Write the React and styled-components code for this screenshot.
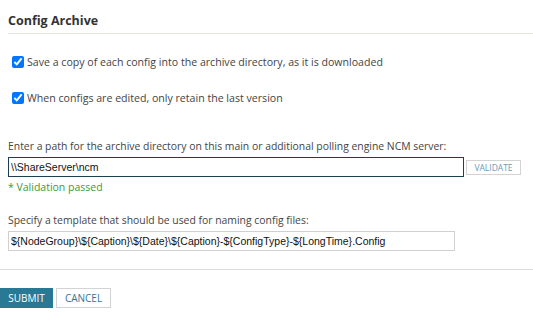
import React, { useState } from 'react';
import styled, { createGlobalStyle } from 'styled-components';

const GlobalStyle = createGlobalStyle`
  body {
    margin: 0;
    background: #ffffff;
    font-family: "Open Sans", "Liberation Sans", sans-serif;
    color: #444;
  }
`;

const Page = styled.div`
  width: 533px;
`;

const Header = styled.div`
  margin-left: 8px;
  padding: 13px 0 4px;
  border-bottom: 1px solid #e4e4dc;
`;

const Title = styled.h2`
  margin: 0;
  font-size: 12.5px;
  line-height: 16px;
  font-weight: 700;
  color: #333;
`;

const Body = styled.div`
  padding: 20px 8px 18px;
  display: flex;
  flex-direction: column;
`;

const CheckRow = styled.label`
  display: flex;
  align-items: center;
  gap: 3px;
  height: 16px;
  margin-bottom: ${(p) => p.$gap || 0}px;
  padding-left: 4px;
  font-size: 10.6px;
  line-height: 16px;
  color: #444;
`;

const Check = styled.input`
  width: 12px;
  height: 12px;
  margin: 0;
`;

const FieldLabel = styled.div`
  font-size: 10.4px;
  line-height: 16px;
  color: #444;
  margin-bottom: 4px;
`;

const InputRow = styled.div`
  display: flex;
  align-items: center;
  gap: 2px;
  margin-top: -1px;
`;

const TextInput = styled.input`
  box-sizing: border-box;
  width: ${(p) => p.$width}px;
  height: ${(p) => p.$height}px;
  padding: 0 2px;
  margin-top: ${(p) => p.$lift || 0}px;
  border: 1px solid ${(p) => (p.$dark ? '#1c3f52' : '#d0d0d0')};
  border-radius: 0;
  font-family: "Liberation Sans", Arial, sans-serif;
  font-size: 10.5px;
  color: #111;
  outline: none;
`;

const ValidateButton = styled.button`
  box-sizing: border-box;
  width: 55px;
  height: 15px;
  padding: 0;
  background: #fff;
  border: 1px solid #d3d3d3;
  font-family: "Open Sans", sans-serif;
  font-size: 8.5px;
  color: #6a9bb2;
  text-transform: uppercase;
`;

const Passed = styled.div`
  font-size: 10.5px;
  line-height: 16px;
  color: #3a9a3a;
  margin: 2px 0 17px;
`;

const Divider = styled.div`
  border-top: 1px solid #dcdcdc;
`;

const Actions = styled.div`
  display: flex;
  gap: 3px;
  padding-top: 18px;
`;

const Button = styled.button`
  box-sizing: border-box;
  width: ${(p) => (p.$primary ? 53 : 55)}px;
  height: 20px;
  padding: 0;
  font-family: "Open Sans", sans-serif;
  font-size: 10px;
  text-transform: uppercase;
  background: ${(p) => (p.$primary ? '#297994' : '#fff')};
  color: ${(p) => (p.$primary ? '#fff' : '#2a7a95')};
  border: 1px solid ${(p) => (p.$primary ? '#297994' : '#d3d3d3')};
`;

function App() {
  const [saveCopy, setSaveCopy] = useState(true);
  const [retainLast, setRetainLast] = useState(true);
  const [path, setPath] = useState('\\\\ShareServer\\ncm');
  const [template, setTemplate] = useState(
    '${NodeGroup}\\${Caption}\\${Date}\\${Caption}-${ConfigType}-${LongTime}.Config'
  );

  return (
    <Page>
      <GlobalStyle />
      <Header>
        <Title>Config Archive</Title>
      </Header>
      <Body>
        <CheckRow $gap={20}>
          <Check type="checkbox" checked={saveCopy} onChange={(e) => setSaveCopy(e.target.checked)} />
          Save a copy of each config into the archive directory, as it is downloaded
        </CheckRow>
        <CheckRow $gap={32}>
          <Check type="checkbox" checked={retainLast} onChange={(e) => setRetainLast(e.target.checked)} />
          When configs are edited, only retain the last version
        </CheckRow>
        <FieldLabel>Enter a path for the archive directory on this main or additional polling engine NCM server:</FieldLabel>
        <InputRow>
          <TextInput $dark $width={456} $height={20} value={path} onChange={(e) => setPath(e.target.value)} />
          <ValidateButton>Validate</ValidateButton>
        </InputRow>
        <Passed>* Validation passed</Passed>
        <FieldLabel>Specify a template that should be used for naming config files:</FieldLabel>
        <TextInput $width={447} $height={20} $lift={-1} value={template} onChange={(e) => setTemplate(e.target.value)} />
      </Body>
      <Divider />
      <Actions>
        <Button $primary>Submit</Button>
        <Button>Cancel</Button>
      </Actions>
    </Page>
  );
}

export default App;
